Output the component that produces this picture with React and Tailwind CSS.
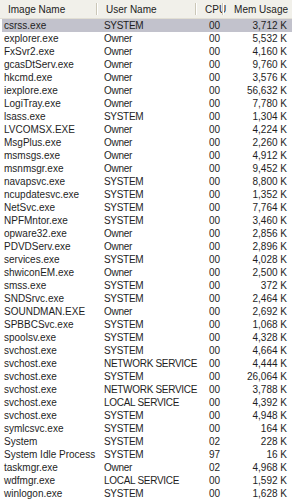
const rows = [
  ['csrss.exe', 'SYSTEM', '00', '3,712 K'],
  ['explorer.exe', 'Owner', '00', '5,532 K'],
  ['FxSvr2.exe', 'Owner', '00', '4,160 K'],
  ['gcasDtServ.exe', 'Owner', '00', '9,760 K'],
  ['hkcmd.exe', 'Owner', '00', '3,576 K'],
  ['iexplore.exe', 'Owner', '00', '56,632 K'],
  ['LogiTray.exe', 'Owner', '00', '7,780 K'],
  ['lsass.exe', 'SYSTEM', '00', '1,304 K'],
  ['LVCOMSX.EXE', 'Owner', '00', '4,224 K'],
  ['MsgPlus.exe', 'Owner', '00', '2,260 K'],
  ['msmsgs.exe', 'Owner', '00', '4,912 K'],
  ['msnmsgr.exe', 'Owner', '00', '9,452 K'],
  ['navapsvc.exe', 'SYSTEM', '00', '8,800 K'],
  ['ncupdatesvc.exe', 'SYSTEM', '00', '1,352 K'],
  ['NetSvc.exe', 'SYSTEM', '00', '7,764 K'],
  ['NPFMntor.exe', 'SYSTEM', '00', '3,460 K'],
  ['opware32.exe', 'Owner', '00', '2,856 K'],
  ['PDVDServ.exe', 'Owner', '00', '2,896 K'],
  ['services.exe', 'SYSTEM', '00', '4,028 K'],
  ['shwiconEM.exe', 'Owner', '00', '2,500 K'],
  ['smss.exe', 'SYSTEM', '00', '372 K'],
  ['SNDSrvc.exe', 'SYSTEM', '00', '2,464 K'],
  ['SOUNDMAN.EXE', 'Owner', '00', '2,692 K'],
  ['SPBBCSvc.exe', 'SYSTEM', '00', '1,068 K'],
  ['spoolsv.exe', 'SYSTEM', '00', '4,328 K'],
  ['svchost.exe', 'SYSTEM', '00', '4,664 K'],
  ['svchost.exe', 'NETWORK SERVICE', '00', '4,444 K'],
  ['svchost.exe', 'SYSTEM', '00', '26,064 K'],
  ['svchost.exe', 'NETWORK SERVICE', '00', '3,788 K'],
  ['svchost.exe', 'LOCAL SERVICE', '00', '4,392 K'],
  ['svchost.exe', 'SYSTEM', '00', '4,948 K'],
  ['symlcsvc.exe', 'SYSTEM', '00', '164 K'],
  ['System', 'SYSTEM', '02', '228 K'],
  ['System Idle Process', 'SYSTEM', '97', '16 K'],
  ['taskmgr.exe', 'Owner', '02', '4,968 K'],
  ['wdfmgr.exe', 'LOCAL SERVICE', '00', '1,592 K'],
  ['winlogon.exe', 'SYSTEM', '00', '1,628 K'],
];

function HeaderCell({ children, right, last }) {
  return (
    <div className={`relative flex items-center h-full ${right ? 'justify-end pr-[4px]' : 'pl-[8px]'}`}>
      <span>{children}</span>
      {!last && <div className="absolute right-0 top-[3px] bottom-[3px] w-[2px] border-l border-[#cbc7b8] border-r border-r-white" />}
    </div>
  );
}

export default function App() {
  return (
    <div className="w-[292px] h-[500px] overflow-hidden bg-white text-[#1e1e1e] text-[10px] leading-[13px]" style={{ fontFamily: '"Liberation Sans", Arial, sans-serif' }}>
      <div className="grid grid-cols-[98px_99px_27px_1fr] h-[19px] bg-[#f1f0ea] border-b border-[#e2dfd4] text-[#222]">
        <HeaderCell>Image Name</HeaderCell>
        <HeaderCell>User Name</HeaderCell>
        <HeaderCell>CPU</HeaderCell>
        <HeaderCell right last>Mem Usage</HeaderCell>
      </div>
      <div className="pl-[2px]">
        {rows.map((r, i) => (
          <div key={i} className={`grid grid-cols-[96px_99px_27px_1fr] h-[13px] ${i === 0 ? 'bg-[#c2c2cc]' : ''}`}>
            <div className="pl-[2px] whitespace-nowrap">{r[0]}</div>
            <div className="pl-[6px] whitespace-nowrap tracking-[-0.3px]">{r[1]}</div>
            <div className="pl-[12px]">{r[2]}</div>
            <div className="text-right pr-[5px]">{r[3]}</div>
          </div>
        ))}
      </div>
    </div>
  );
}
